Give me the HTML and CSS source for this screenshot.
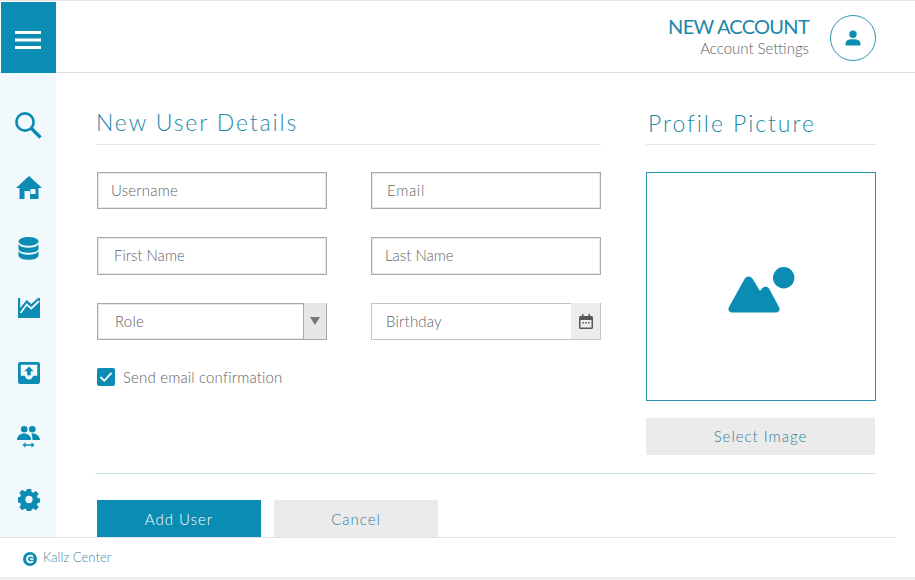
FILE: index.html
```html
<!DOCTYPE html>
<html lang="en">
<head>
<meta charset="utf-8">
<title>New Account</title>
<link rel="stylesheet" href="styles.css">
</head>
<body>
<div class="app">
  <header class="topbar">
    <button class="menu-btn" aria-label="Menu">
      <svg width="26" height="18" viewBox="0 0 26 18"><path d="M0 1.500h26M0 9h26M0 16.500h26" stroke="#fff" stroke-width="3"/></svg>
    </button>
    <div class="account">
      <div class="account-text">
        <div class="account-title">NEW ACCOUNT</div>
        <div class="account-sub">Account Settings</div>
      </div>
      <div class="avatar">
        <svg width="16" height="16" viewBox="0 0 16 16"><circle cx="8" cy="4.300" r="3.700" fill="#0a8cb3"/><path d="M.5 14.500c0-4 2.500-5.200 7.500-5.200s7.500 1.200 7.500 5.200c0 .8-.4 1-1 1H1.500c-.6 0-1-.2-1-1z" fill="#0a8cb3"/></svg>
      </div>
    </div>
  </header>
  <div class="middle">
    <nav class="sidebar">
      <svg class="ni-search" width="27" height="27" viewBox="0 0 27 27"><circle cx="10" cy="10" r="8.600" fill="none" stroke="#0a8cb3" stroke-width="2.700"/><path d="M16 16l9.500 9.500" stroke="#0a8cb3" stroke-width="3.300"/></svg>
      <svg class="ni-home" width="26" height="23" viewBox="0 0 26 23"><path fill-rule="evenodd" d="M13 0L26 12h-3.500V23H14V15H8.500v8H3.500V12H0zM14.500 13v5h5v-5z" fill="#0a8cb3"/></svg>
      <svg class="ni-db" width="21" height="23" viewBox="0 0 22 24"><ellipse cx="11" cy="4.500" rx="10.500" ry="4.500" fill="#0a8cb3"/><path d="M.5 7.500c2 2.800 6 3.600 10.500 3.600s8.500-.8 10.500-3.600v5c-1 3-5.500 4-10.500 4s-9.500-1-10.500-4z" fill="#0a8cb3"/><path d="M.5 15c2 2.800 6 3.600 10.500 3.600S19.500 17.800 21.500 15v4.500c-1 3-5.500 4.300-10.500 4.300S1.500 22.500.5 19.500z" fill="#0a8cb3"/></svg>
      <svg class="ni-chart" width="22" height="20" viewBox="0 0 22 20"><path d="M0 0h2.200v10L8.700 2l4.600 4L20 0h2v20H0z" fill="#0a8cb3"/><path d="M2.500 15L8.700 6.500l4.600 4L21 3" fill="none" stroke="#f1f9fc" stroke-width="1.800"/></svg>
      <svg class="ni-inbox" width="22" height="22" viewBox="0 0 24 24"><path fill-rule="evenodd" d="M2.500 0h19A2.500 2.500 0 0 1 24 2.500v19a2.500 2.500 0 0 1-2.500 2.500h-19A2.500 2.500 0 0 1 0 21.500v-19A2.500 2.500 0 0 1 2.500 0zM3 3v12h4.500c.5 2.500 2.200 4 4.500 4s4-1.500 4.500-4H21V3z" fill="#0a8cb3"/><path d="M12 5l5 5h-3v4.500h-4V10H7z" fill="#0a8cb3"/></svg>
      <svg class="ni-people" width="23" height="22" viewBox="0 0 23 22"><circle cx="7.200" cy="3.300" r="3.300" fill="#0a8cb3"/><circle cx="15.300" cy="3.300" r="3.300" fill="#0a8cb3"/><path d="M0 14c0-4 3-6.500 7-6.500s7 2.500 7 6.500z" fill="#0a8cb3"/><path d="M14.500 7.500c4.500-.5 8 2 8.500 6.500h-7.500c0-2-.5-4.500-1-6.500z" fill="#0a8cb3"/><path d="M8 19h7" stroke="#0a8cb3" stroke-width="1.500"/><path d="M8.500 16.300L5.500 19l3 2.700zM14.500 16.300l3 2.700-3 2.700z" fill="#0a8cb3"/></svg>
      <svg class="ni-gear" width="22" height="23" viewBox="0 0 24 24"><path fill-rule="evenodd" d="M9.700.5h4.600l.6 3.200 1.800.8 2.700-1.900 3.200 3.200-1.900 2.700.8 1.800 3 .6v4.400l-3 .6-.8 1.800 1.900 2.700-3.200 3.200-2.700-1.900-1.800.8-.6 3h-4.600l-.6-3-1.800-.8-2.700 1.900-3.200-3.200 1.900-2.700-.8-1.800-3-.6V9.700l3-.6.8-1.800-1.900-2.700 3.200-3.200 2.700 1.900 1.800-.8zM12 8a4 4 0 1 0 0 8 4 4 0 0 0 0-8z" fill="#0a8cb3"/></svg>
    </nav>
    <main class="content">
      <div class="columns">
        <section class="details">
          <h2 class="section-title">New User Details</h2>
          <div class="form-grid">
            <div class="field"><span class="ph">Username</span></div>
            <div class="field"><span class="ph ph-email">Email</span></div>
            <div class="field"><span class="ph ph-first">First Name</span></div>
            <div class="field"><span class="ph ph-last">Last Name</span></div>
            <div class="field select"><span class="ph ph-role">Role</span><span class="caret"></span></div>
            <div class="field date"><span class="ph ph-birth">Birthday</span>
              <span class="cal"><svg width="14" height="15" viewBox="0 0 14 15"><path fill-rule="evenodd" d="M1.500 2H3V0h1.500v2h5V0H11v2h1.500A1.500 1.500 0 0 1 14 3.500V13.500a1.500 1.500 0 0 1-1.500 1.500h-11A1.500 1.500 0 0 1 0 13.500V3.500A1.500 1.500 0 0 1 1.500 2zM1.500 6v7.500h11V6z" fill="#55585a"/><path d="M3.500 8h1.500v1.500H3.500zM6.300 8h1.500v1.500H6.300zM9 8h1.500v1.500H9z" fill="#55585a"/></svg></span>
            </div>
          </div>
          <label class="check">
            <span class="box"><svg width="14" height="12" viewBox="0 0 14 12"><path d="M1.500 6l3.800 3.800L12.500 1.800" fill="none" stroke="#fff" stroke-width="1.800"/></svg></span>
            <span>Send email confirmation</span>
          </label>
        </section>
        <aside class="picture">
          <h2 class="section-title title-pic">Profile Picture</h2>
          <div class="dropzone">
            <svg width="67" height="46" viewBox="0 0 67 46"><circle cx="55.700" cy="10.700" r="10.700" fill="#0a8cb3"/><path d="M4 45.500C1 45.500-.5 42.500 1 40L16 13C18 8.500 23 8.500 25 12.500L32 24L34 21.500C36 19 39 19 41 21.500L51 40C52.500 42.500 51 45.500 48 45.500Z" fill="#0a8cb3"/></svg>
          </div>
          <button class="btn btn-grey btn-select">Select Image</button>
        </aside>
      </div>
      <div class="divider"></div>
      <div class="actions">
        <button class="btn btn-primary">Add User</button>
        <button class="btn btn-grey btn-cancel">Cancel</button>
      </div>
    </main>
  </div>
  <footer class="footer">
    <div class="footer-inner">
      <svg width="14" height="14" viewBox="0 0 14 14"><circle cx="7" cy="7" r="7" fill="#0a8cb3"/><path d="M10 4.800A3.400 3.400 0 1 0 10 9.200" fill="none" stroke="#fff" stroke-width="1.900"/><path d="M7 7h3.500" stroke="#fff" stroke-width="1.500"/></svg>
      <span class="footer-text">Kallz Center</span>
    </div>
  </footer>
</div>
</body>
</html>
```
FILE: styles.css
```css
* { box-sizing: border-box; }
html, body { margin: 0; padding: 0; }
body { background: #fff; font-family: Lato, "Open Sans", sans-serif; color: #6b6f72; }
.app { width: 915px; height: 580px; display: flex; flex-direction: column; overflow: hidden; border-top: 1px solid #e6e6e6; border-bottom: 3px solid #ececec; }
.topbar { height: 72px; flex: none; display: flex; justify-content: space-between; border-bottom: 1px solid #dcdfe0; }
.menu-btn { width: 55px; height: 72px; margin: 1px 0 -1px 1px; background: #0a8cb3; border: 0; padding: 4px 1px 0 0; display: flex; align-items: center; justify-content: center; }
.account { display: flex; align-items: center; gap: 21px; padding: 0 39px 0 0; }
.account-text { text-align: right; margin-top: -2px; }
.account-title { font-size: 20px; line-height: 24px; color: #1c87a8; letter-spacing: -.72px; }
.account-sub { font-size: 15px; font-weight: 300; line-height: 20px; color: #5c6063; }
.avatar { width: 46px; height: 46px; border: 1px solid #2b93b2; border-radius: 50%; display: flex; align-items: center; justify-content: center; margin-top: 2px; }
.middle { flex: 1; display: flex; min-height: 0; }
.sidebar { width: 56px; flex: none; background: #f1f9fc; display: flex; flex-direction: column; align-items: center; padding: 39px 0 0 1px; }
.sidebar svg { flex: none; }
.ni-home { margin-top: 37px; }
.ni-db { margin-top: 38px; }
.ni-chart { margin-top: 38px; }
.ni-inbox { margin-top: 44px; }
.ni-people { margin-top: 42px; }
.ni-gear { margin-top: 40px; }
.content { flex: 1; padding: 0 39px; display: flex; flex-direction: column; }
.columns { display: flex; justify-content: space-between; height: 399.500px; flex: none; }
.details { width: 505px; margin-left: 1px; padding-top: 35px; }
.picture { width: 230px; padding-top: 36px; }
.section-title { margin: 0; font-size: 23px; font-weight: 300; line-height: 28px; height: 37px; letter-spacing: 1.860px; color: #1f88a8; border-bottom: 1px solid #e2e6e8; white-space: nowrap; }
.title-pic { padding-left: 2px; height: 36px; letter-spacing: 1.950px; }
.form-grid { display: grid; grid-template-columns: 230px 230px; column-gap: 44px; row-gap: 28px; margin: 26.600px 0 0 1px; }
.field { height: 37.500px; border: 1px solid #a8a8a8; box-shadow: inset 0 0 0 1px #e8e8e8; background: #fff; display: flex; align-items: center; justify-content: space-between; font-size: 15px; font-weight: 300; padding: 0 0 1px 13px; color: #5f6366; }
.ph { letter-spacing: .2px; }
.ph-email { margin-left: 2px; letter-spacing: .7px; }
.ph-first { margin-left: 3px; letter-spacing: 0; }
.ph-last { letter-spacing: 0; }
.ph-role { margin-left: 4px; }
.ph-birth { margin-left: 1px; }
.caret { width: 23px; height: 36px; margin-bottom: -1px; background: #e6e6e6; border-left: 1px solid #a8a8a8; display: flex; align-items: center; justify-content: center; }
.caret::after { content: ""; border-left: 5px solid transparent; border-right: 5px solid transparent; border-top: 8px solid #777; }
.date { border-color: #c4c4c4; box-shadow: none; }
.cal { width: 29px; height: 36px; margin-bottom: -1px; background: #ececec; display: flex; align-items: center; justify-content: center; }
.check { display: flex; align-items: center; gap: 8px; margin: 28px 0 0 1px; font-size: 15px; font-weight: 300; letter-spacing: .16px; color: #5f6366; }
.box { width: 18px; height: 18px; border-radius: 2px; background: #0a8cb3; display: flex; align-items: center; justify-content: center; }
.dropzone { height: 229px; margin-top: 27px; border: 1px solid #2b93b2; display: flex; align-items: center; justify-content: center; padding-top: 6px; }
.btn { height: 38px; border: 0; font-family: inherit; font-size: 15px; letter-spacing: 1px; display: block; padding: 0; }
.btn-grey { background: #ebebeb; color: #2f7f9f; font-weight: 300; }
.btn-select { width: 229px; height: 37px; margin-top: 17px; padding-bottom: 1px; }
.divider { height: 1px; background: #cfe3ee; flex: none; }
.actions { display: flex; gap: 13px; padding: 26px 0 0 2px; }
.btn-primary { width: 164px; background: #0a8cb3; color: #fff; font-weight: 300; }
.btn-cancel { width: 164px; }
.footer { height: 40px; flex: none; padding-right: 20px; position: relative; background: #fff; }
.footer-inner { height: 40px; border-top: 1px solid #dfe2e3; display: flex; align-items: center; gap: 6px; padding: 2px 0 0 23px; font-size: 13px; font-weight: 300; color: #4a86a0; letter-spacing: .05px; }
.footer-text { margin-top: -4px; }
```
